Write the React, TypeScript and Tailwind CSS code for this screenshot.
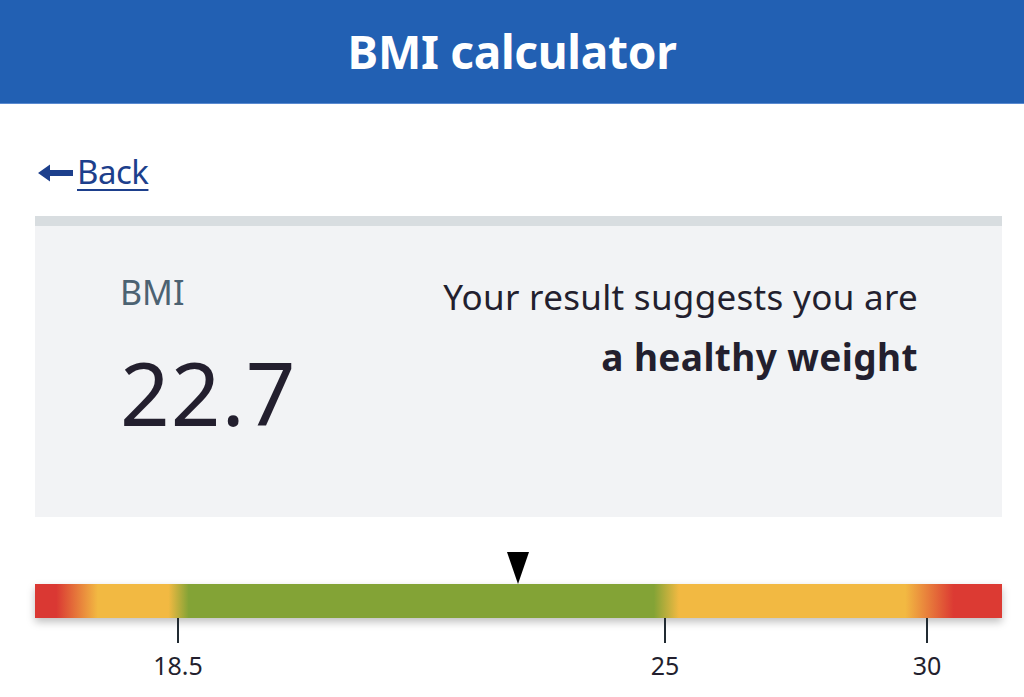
export default function App() {
  return (
    <div className="w-[1024px] h-[697px] overflow-hidden bg-white font-['Noto_Sans',sans-serif] text-[#212b32]">
      <header className="h-[104px] bg-[#2260b3] border-b border-[#5a8ad0] flex items-center justify-center">
        <h1 className="text-white font-bold text-[46px] leading-none tracking-[-0.3px] pb-[2px]">BMI calculator</h1>
      </header>

      <div className="px-[35px] pr-[22px]">
        <a href="#" className="mt-[50px] ml-[3px] inline-flex items-center text-[#1d3f8c] text-[33px] leading-[36px]">
          <svg width="35" height="18" viewBox="0 0 35 18" className="mr-[4px] mt-[2px]">
            <path d="M0 9 L12 0.5 L12 6 L35 6 L35 12 L12 12 L12 17.5 Z" fill="#1d3f8c" />
          </svg>
          <span className="underline decoration-[2px] underline-offset-[5px] tracking-[-0.5px]">Back</span>
        </a>

        <section className="mt-[26px] border-t-[10px] border-[#d8dde0] bg-[#f2f3f5] h-[301px] flex justify-between px-[85px] pr-[84px]">
          <div className="pt-[49px]">
            <div className="text-[34px] leading-none text-[#4c6272]">BMI</div>
            <div className="mt-[40px] text-[87px] leading-none tracking-[1px] text-[#231f2e]">22.7</div>
          </div>
          <div className="pt-[53px] text-right">
            <div className="text-[35px] leading-none text-[#231f2e] tracking-[0.3px]">Your result suggests you are</div>
            <div className="mt-[24px] text-[37px] leading-none font-bold text-[#231f2e] tracking-[0.4px]">a healthy weight</div>
          </div>
        </section>

        <div className="relative mt-[35px]">
          <div className="absolute left-[472px] top-0 w-0 h-0 border-l-[11px] border-r-[11px] border-t-[32px] border-l-transparent border-r-transparent border-t-black" />
          <div className="pt-[32px]">
            <div className="h-[34px] shadow-[0_4px_8px_rgba(0,0,0,0.25)] bg-[linear-gradient(to_right,#da3833_0%,#da3833_2.2%,#f2b942_6.5%,#f2b942_13.8%,#83a336_15.9%,#83a336_64%,#f2b942_66.6%,#f2b942_90%,#dc3a33_95%,#dc3a33_100%)]" />
          </div>
          <div className="relative h-[80px]">
            {[
              { x: 143, label: '18.5' },
              { x: 630, label: '25' },
              { x: 892, label: '30' },
            ].map((t) => (
              <div key={t.label} className="absolute top-0 flex flex-col items-center w-[80px] -ml-[40px]" style={{ left: t.x }}>
                <div className="w-[2px] h-[25px] bg-[#212b32]" />
                <div className="mt-[10px] text-[25px] leading-none text-[#231f2e]">{t.label}</div>
              </div>
            ))}
          </div>
        </div>
      </div>
    </div>
  )
}
